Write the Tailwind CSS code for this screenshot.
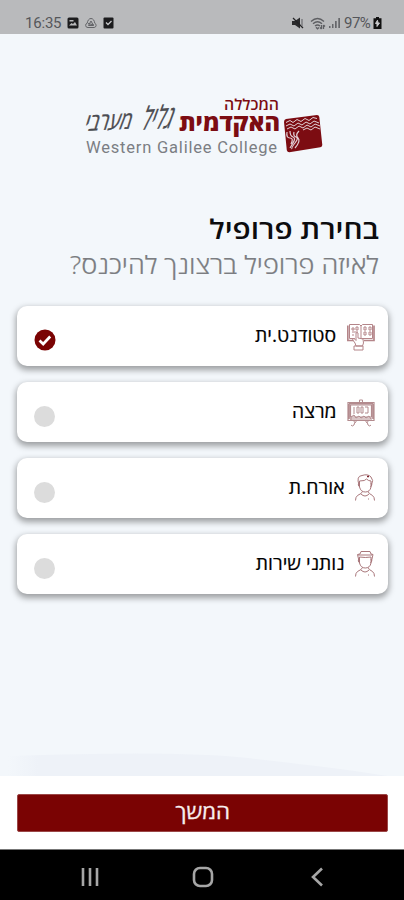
<!DOCTYPE html>
<html lang="he">
<head>
<meta charset="utf-8">
<title>בחירת פרופיל</title>
<script src="https://cdn.jsdelivr.net/npm/@tailwindcss/browser@4"></script>
</head>
<body class="bg-black">
<div class="flex h-[900px] w-[404px] flex-col overflow-hidden bg-[#f3f7fb] font-['Open_Sans','Noto_Sans',sans-serif]">
  <header class="flex h-[34px] shrink-0 items-end justify-between bg-[#b9babc] pr-[22px] pb-[2px] pl-[25px] font-[Roboto,sans-serif] text-[15px] leading-[18px] text-[#55565a]">
    <div class="flex items-center">
      <span class="w-[36px] tracking-[-0.2px]">16:35</span>
      <svg class="ml-[6px] h-3 w-3" viewBox="0 0 12 12"><rect x=".5" y=".5" width="11" height="11" rx="1.5" fill="#1c1c1e"/><path d="M2 8.5 4.5 6 6 7l2-2 2 3.5M2.5 3h4v1.5h-4z" fill="#b9babc"/></svg>
      <svg class="ml-[6px] h-3 w-3" viewBox="0 0 12 12" fill="none" stroke="#626367"><path d="M3 10.5h6.2a2.2 2.2 0 0 0 .6-4.2C9.5 3.500 8 1.500 6 1.500S2.600 3.500 2.200 6.200A2.200 2.200 0 0 0 3 10.500Z"/><path d="m3.500 8.500 2.500-4.500 2.500 4.500ZM3 6.500l6 1.500"/></svg>
      <svg class="ml-[6px] h-3 w-[11px]" viewBox="0 0 11 12"><rect x=".5" y=".5" width="10" height="11" rx="1" fill="#1c1c1e"/><path d="m3 5.500 2 2 3.500-3.500" fill="none" stroke="#c8c9cb" stroke-width="1.300"/></svg>
    </div>
    <div class="flex items-center">
      <svg class="mr-px h-3 w-3" viewBox="0 0 12 12"><path d="M0 4h3l5-3.500v11L3 8H0Z" fill="#2c2c2e"/><path d="m1 1 10 10" stroke="#242426" stroke-width="1.300"/><path d="M10 2v7" stroke="#77787b" stroke-width="1.400"/></svg>
      <svg class="ml-[5px] h-[13px] w-4" viewBox="0 0 16 13" fill="none" stroke="#5e5f63" stroke-width="1.300"><path d="M1 4.500q6.500-6 13 0M3 6.800q4.500-4 9 0M5 9q2.500-2 5 0"/><path d="m6 10.300 1.500 1.500L9 10.500M11.500 8v4m0 0-1.500-1.500m3.500 1.500V8m0 0 1.500 1.500"/></svg>
      <svg class="ml-[3px] h-3 w-3" viewBox="0 0 12 12" fill="#66676b"><path d="M0 9h1.500v2H0zM3 7h1.500v4H3zM6 4h1.700v7H6zM9.300 1H11v10H9.300z"/></svg>
      <span class="ml-[3px] w-[28px] tracking-[-0.5px]">97%</span>
      <svg class="ml-[1px] h-3 w-[9px]" viewBox="0 0 8 12"><path d="M2.500 0h3v1.200H8V12H0V1.200h2.500Z" fill="#111"/><path d="M4 3.200 2 6.500h1.500V9.500L6 6H4.500Z" fill="#c9cacc" stroke="#c9cacc"/></svg>
    </div>
  </header>

  <main class="relative flex flex-1 flex-col">
    <svg class="mx-auto mt-[51px] h-[80px] w-[264px]" viewBox="70 85 264 80" role="img" aria-label="Western Galilee College">
      <g font-family="'Open Sans','Noto Sans',sans-serif" fill="#7c0c12">
        <text x="224" y="109.500" font-size="15" font-weight="600" textLength="55" lengthAdjust="spacingAndGlyphs">המכללה</text>
        <text x="179" y="131" font-size="23" font-weight="800" textLength="101" lengthAdjust="spacingAndGlyphs">האקדמית</text>
      </g>
      <g font-family="'Open Sans','Noto Sans',sans-serif" fill="#4b4c51" stroke="#4b4c51" stroke-width=".35">
        <text transform="translate(139 130) rotate(-4) skewX(-24)" x="0" y="0" font-size="31" textLength="31" lengthAdjust="spacingAndGlyphs">גליל</text>
        <text transform="translate(83 131) rotate(-3) skewX(-20)" x="0" y="0" font-size="24" textLength="47" lengthAdjust="spacingAndGlyphs">מערבי</text>
      </g>
      <text x="86" y="153" font-family="Roboto,sans-serif" font-size="16.500" fill="#7b7e83" textLength="191" lengthAdjust="spacing">Western Galilee College</text>
      <path d="m286 119 31-4q2 0 2.300 2l3 28q0 2-2 2.300l-31 5q-2 0-2.500-2L284 122q0-2.500 2-3Z" fill="#7c0c12"/>
      <g fill="none" stroke="#e3d3d8" stroke-width="1">
        <path d="m286 122.500 4-2 3 2 4-3 4 2 4-3 4 2 4-3 4 1M286 126l4-2 4 2 4-3 4 2 4-3 4 2 4-3 5 2M287 129l4-2 4 2 4-3 4 2 4-3 4 2 4-3 5 2M303 130l4-2 4 2 4-3 5 2"/>
        <path d="M287 132q-1 6 3 6t1 6M290 131q0 5 3 6t0 6-3 5M294 132q-1 4 2 5t-1 6-3 6M299 131q-4 4-1 7t-3 10" stroke-width="1.200"/>
      </g>
    </svg>

    <section dir="rtl" class="mt-[46px] pr-[25px]">
      <h1 class="origin-right scale-x-[1.105] text-[27px] leading-9 font-semibold text-[#0c0c0e]">בחירת פרופיל</h1>
      <p class="origin-right scale-x-[1.083] text-[25px] leading-[34px] font-light text-[#7b7d81] [-webkit-text-stroke:0.2px_#7b7d81]">לאיזה פרופיל ברצונך להיכנס?</p>
    </section>

    <section dir="rtl" class="mt-[25px] mr-[16px] ml-[17px] flex flex-col gap-4 text-[18px] font-medium text-black [-webkit-text-stroke:0.2px_#000]">
      <div class="flex h-[60px] items-center rounded-[10px] bg-white pr-[13px] pl-[17px] shadow-[0_3px_6px_1px_rgba(0,0,0,0.36)]">
        <svg class="h-[29px] w-7" viewBox="0 0 28 29" fill="none" stroke="#b48589" stroke-width="1"><path d="M2.500 2.500h10L14 4l1.500-1.500h10v14H14v-13M2.500 2.500v14H8" /><path d="M.8 3.500v15h7.200m9 0h10v-15" stroke-width="1.700"/><path d="M5 6h2v2H5zm4-1h2v3H9zm8 0h2v3h-2zm5 0h2v3h-2zM5 10h6M17 10h2v3h-2zm5 0h2v3h-2zM5 13h2"/><path d="M8 21 5.500 17.500 7 16.500l2 2V11q1-1 2 0v5l5 1 .5 4-1 3H9Zm-1 3h9v4H7Z" fill="#fff"/></svg>
        <span class="mr-[11px] -mt-px origin-right scale-x-[1.08]">סטודנט.ית</span>
        <svg class="mt-2 mr-auto h-[22px] w-[22px]" viewBox="0 0 22 22"><circle cx="11" cy="11" r="10.500" fill="#7a0303"/><path d="m5.500 11.500 3.700 3.500 7-7.500" fill="none" stroke="#fff" stroke-width="2.700"/></svg>
      </div>
      <div class="flex h-[60px] items-center rounded-[10px] bg-white pr-[13px] pl-[17px] shadow-[0_3px_6px_1px_rgba(0,0,0,0.36)]">
        <svg class="h-[29px] w-7" viewBox="0 0 28 29" fill="none" stroke="#b38b8e" stroke-width="1"><path d="M1 4.500h26v18H1zM3.500 7h21v12h-21zM2 5.700h24M2.200 6v15M25.800 6v15M3 21h22" stroke-width="1.200"/><path d="M12.500 4V2h3v2M7 9v7M10 9h2v6h-2zM14 9h2v6h-2zM18 9h3v6h-3M4 22v-3l3-2 2 3 3-2 2 2 3-2 2 2 3-2 2 3M6 22q3 2 1 5-2 2-3 0M22 22q-3 2-1 5 2 2 3 0M10 22l-2 3m10-3 2 3"/></svg>
        <span class="mr-[11px] -mt-px origin-right scale-x-[1.07]">מרצה</span>
        <span class="mt-[9px] mr-auto h-[21px] w-[21px] rounded-full bg-[#dcdcdc]"></span>
      </div>
      <div class="flex h-[60px] items-center rounded-[10px] bg-white pr-[13px] pl-[17px] shadow-[0_3px_6px_1px_rgba(0,0,0,0.36)]">
        <svg class="h-[28px] w-5" viewBox="0 0 20 28" fill="none" stroke="#a9777b" stroke-width="1"><path d="M4 11Q1 2 7 1.500q6-2 9 1.500 3 3 .5 8M4.500 7q6 0 7-2 2 2 4.500 2v6q-1 5-5.700 5-4.500 0-5.800-5ZM4 9q-2 2 .7 4M16 9q2 2-.5 4M7.500 17.500q-.5 2-5 4-2 1.500-2 5M13 17.500q.5 2 4.500 4 2 1.500 2 5M6 20q4 4 8 0"/><path d="M13 25h1.500" stroke-dasharray="1"/><path d="M12 2.500h2" stroke="#7a2028" stroke-width="1.500"/></svg>
        <span class="mr-[10px] -mt-px origin-right scale-x-[1.08]">אורח.ת</span>
        <span class="mt-[9px] mr-auto h-[21px] w-[21px] rounded-full bg-[#dcdcdc]"></span>
      </div>
      <div class="flex h-[60px] items-center rounded-[10px] bg-white pr-[13px] pl-[17px] shadow-[0_3px_6px_1px_rgba(0,0,0,0.36)]">
        <svg class="h-[28px] w-5" viewBox="0 0 20 28" fill="none" stroke="#a9777b" stroke-width="1"><path d="M4 11 2.500 4.500 5 4 6 1.500h9L16 4l2 .5L16.500 11M3 5h14M4.500 7q6 1 11.500 0v6q-1 5-5.700 5-4.500 0-5.800-5ZM4 9q-2 2 .7 4M16 9q2 2-.5 4M7.500 17.500q-.5 2-5 4-2 1.500-2 5M13 17.500q.5 2 4.500 4 2 1.500 2 5M6 20q4 4 8 0"/><path d="M13 25h1.500" stroke-dasharray="1"/></svg>
        <span class="mr-[10px] -mt-px origin-right scale-x-[1.075]">נותני שירות</span>
        <span class="mt-[9px] mr-auto h-[21px] w-[21px] rounded-full bg-[#dcdcdc]"></span>
      </div>
    </section>
    <svg class="mt-auto h-[24px] w-full" viewBox="0 0 404 24"><defs><linearGradient id="hill"><stop offset="0" stop-color="#eef2f8" stop-opacity="0"/><stop offset=".08" stop-color="#eef2f8"/></linearGradient></defs><path d="M8 24V4q170-6 240 2 90 10 140 18Z" fill="url(#hill)"/></svg>
  </main>

  <footer class="shrink-0">
    <div class="h-[74px] border-b border-[#777] bg-white pt-[18px] pr-[16px] pl-[17px]">
      <button class="flex h-[38px] w-full items-center justify-center rounded-[2px] border border-[#9b4747] bg-[#7a0303] pb-[3px] text-[21px] leading-none font-medium text-[#f8eeee] [-webkit-text-stroke:0.3px_#f8eeee]"><span class="scale-x-[1.06]">המשך</span></button>
    </div>
    <nav class="flex h-[50px] items-center bg-black pt-[3px] pl-[80px] text-[#a6a6a6]">
      <svg class="h-5 w-5" viewBox="0 0 20 20" fill="none" stroke="currentColor" stroke-width="2.600"><path d="M3 1v18M10 1v18M17 1v18"/></svg>
      <svg class="ml-[92px] h-[22px] w-[22px]" viewBox="0 0 22 22" fill="none" stroke="currentColor" stroke-width="2.600"><rect x="2" y="2" width="18" height="18" rx="6"/></svg>
      <svg class="ml-[96px] h-5 w-[14px]" viewBox="0 0 14 20" fill="none" stroke="currentColor" stroke-width="2.600"><path d="M12 1.500 3 10l9 8.500"/></svg>
    </nav>
  </footer>
</div>
</body>
</html>
